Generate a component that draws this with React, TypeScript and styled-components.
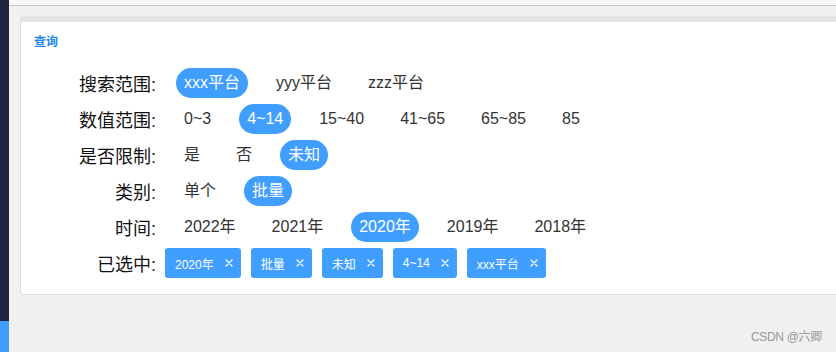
import React, { FC, useState } from "react";
import styled, { createGlobalStyle } from "styled-components";

const GlobalStyle = createGlobalStyle`
    html, body {
        margin: 0;
        padding: 0;
        overflow: hidden;
        background: #f0f0f0;
        font-family: "Liberation Sans", "Noto Sans CJK SC", sans-serif;
    }
`;

const Page = styled.div`
    width: 836px;
    height: 352px;
    display: flex;
    position: relative;
    overflow: hidden;
`;

const SideBar = styled.div`
    width: 9px;
    flex-shrink: 0;
    display: flex;
    flex-direction: column;
    background: #1f2440;
    & > div{
        margin-top: auto;
        height: 31px;
        background: #409eff;
    }
`;

const Main = styled.div`
    flex: 1;
    min-width: 0;
    background: #f0f0f0;
    overflow: hidden;
`;

const TopBar = styled.div`
    height: 5px;
    background: #f8f8fa;
    border-bottom: 1px solid #c6c6c6;
`;

const Card = styled.div`
    margin: 10px 0 0 11px;
    width: 840px;
    box-sizing: border-box;
    background: #fff;
    border: 1px solid #dcdcdc;
    border-top: 6px solid #e3e3e3;
    border-radius: 4px;
    padding: 12px 13px 16px;
`;

const CardTitle = styled.div`
    color: #1e88ef;
    font-size: 12px;
    font-weight: bold;
    line-height: 16px;
    margin-bottom: 18px;
`;

const Rows = styled.div`
    display: flex;
    flex-direction: column;
    gap: 6px;
`;

const Row = styled.div`
    display: flex;
    align-items: center;
    height: 30px;
`;

const Label = styled.div`
    width: 122px;
    flex-shrink: 0;
    text-align: right;
    font-size: 18px;
    color: #111;
    margin-right: 9px;
    white-space: nowrap;
`;

const Options = styled.div`
    display: flex;
    align-items: center;
    gap: 20px;
    margin-left: 11px;
`;

const Option = styled.span<{ active: boolean }>`
    height: 30px;
    line-height: 30px;
    padding: 0 8px;
    border-radius: 15px;
    font-size: 16px;
    white-space: nowrap;
    cursor: pointer;
    color: ${props => props.active ? "#fff" : "#333"};
    background: ${props => props.active ? "#409eff" : "transparent"};
`;

const Tags = styled.div`
    display: flex;
    align-items: center;
    gap: 10px;
`;

const Tag = styled.span`
    display: inline-flex;
    align-items: center;
    height: 30px;
    padding: 0 8px 0 10px;
    border-radius: 3px;
    background: #409eff;
    color: #fff;
    font-size: 12px;
    white-space: nowrap;
`;

const CloseButton = styled.span`
    display: inline-flex;
    align-items: center;
    margin-left: 11px;
    cursor: pointer;
`;

const Watermark = styled.div`
    position: absolute;
    right: 14px;
    bottom: 8px;
    font-size: 12px;
    color: #999;
    letter-spacing: -0.3px;
`;

type Group = { key: string, label: string, items: string[] };

const groups: Group[] = [
    { key: "platform", label: "搜索范围:", items: ["xxx平台", "yyy平台", "zzz平台"] },
    { key: "range", label: "数值范围:", items: ["0~3", "4~14", "15~40", "41~65", "65~85", "85"] },
    { key: "limit", label: "是否限制:", items: ["是", "否", "未知"] },
    { key: "type", label: "类别:", items: ["单个", "批量"] },
    { key: "year", label: "时间:", items: ["2022年", "2021年", "2020年", "2019年", "2018年"] },
];

const tagOrder = ["year", "type", "limit", "range", "platform"];

const Close: FC = () => (
    <svg width="8" height="8" viewBox="0 0 8 8">
        <path d="M1 1L7 7M7 1L1 7" stroke="#fff" strokeWidth="1.2" strokeLinecap="round" />
    </svg>
);

const App: FC = () => {
    const [selected, setSelected] = useState<Record<string, string>>({
        platform: "xxx平台",
        range: "4~14",
        limit: "未知",
        type: "批量",
        year: "2020年",
    });
    const pick = (key: string, value: string) => setSelected({ ...selected, [key]: value });
    const remove = (key: string) => {
        const next = { ...selected };
        delete next[key];
        setSelected(next);
    };
    return (
        <Page>
            <GlobalStyle />
            <SideBar><div /></SideBar>
            <Main>
                <TopBar />
                <Card>
                    <CardTitle>查询</CardTitle>
                    <Rows>
                        {groups.map(g => (
                            <Row key={g.key}>
                                <Label>{g.label}</Label>
                                <Options>
                                    {g.items.map(item => (
                                        <Option key={item} active={selected[g.key] === item} onClick={() => pick(g.key, item)}>
                                            {item}
                                        </Option>
                                    ))}
                                </Options>
                            </Row>
                        ))}
                        <Row>
                            <Label>已选中:</Label>
                            <Tags>
                                {tagOrder.filter(k => selected[k]).map(k => (
                                    <Tag key={k}>
                                        {selected[k]}
                                        <CloseButton onClick={() => remove(k)}><Close /></CloseButton>
                                    </Tag>
                                ))}
                            </Tags>
                        </Row>
                    </Rows>
                </Card>
            </Main>
            <Watermark>CSDN @六卿</Watermark>
        </Page>
    );
};

export default App;
